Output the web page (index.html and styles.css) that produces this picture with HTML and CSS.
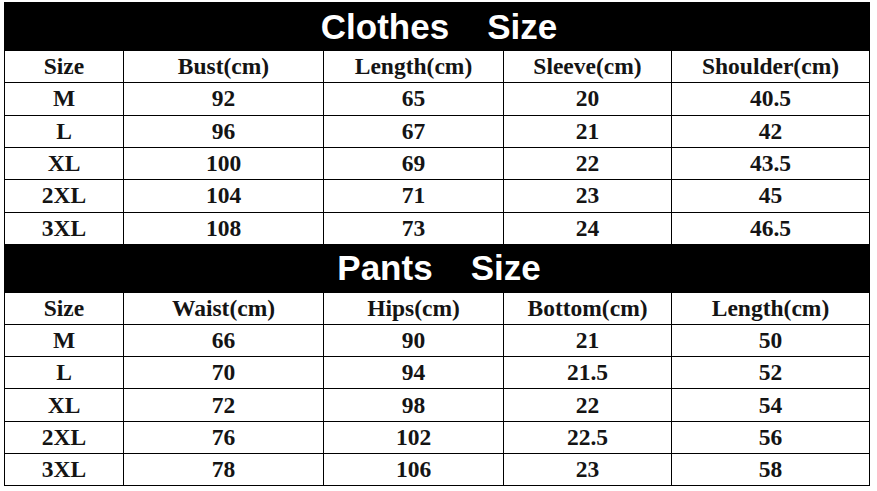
FILE: index.html
```html
<!DOCTYPE html>
<html>
<head>
<meta charset="utf-8">
<link rel="stylesheet" href="styles.css">
</head>
<body>
<div class="chart">
  <div class="title"><span>Clothes</span><span>Size</span></div>
  <div class="cell">Size</div><div class="cell">Bust(cm)</div><div class="cell">Length(cm)</div><div class="cell">Sleeve(cm)</div><div class="cell">Shoulder(cm)</div>
  <div class="cell">M</div><div class="cell">92</div><div class="cell">65</div><div class="cell">20</div><div class="cell">40.5</div>
  <div class="cell">L</div><div class="cell">96</div><div class="cell">67</div><div class="cell">21</div><div class="cell">42</div>
  <div class="cell">XL</div><div class="cell">100</div><div class="cell">69</div><div class="cell">22</div><div class="cell">43.5</div>
  <div class="cell">2XL</div><div class="cell">104</div><div class="cell">71</div><div class="cell">23</div><div class="cell">45</div>
  <div class="cell">3XL</div><div class="cell">108</div><div class="cell">73</div><div class="cell">24</div><div class="cell">46.5</div>
  <div class="title"><span>Pants</span><span>Size</span></div>
  <div class="cell">Size</div><div class="cell">Waist(cm)</div><div class="cell">Hips(cm)</div><div class="cell">Bottom(cm)</div><div class="cell">Length(cm)</div>
  <div class="cell">M</div><div class="cell">66</div><div class="cell">90</div><div class="cell">21</div><div class="cell">50</div>
  <div class="cell">L</div><div class="cell">70</div><div class="cell">94</div><div class="cell">21.5</div><div class="cell">52</div>
  <div class="cell">XL</div><div class="cell">72</div><div class="cell">98</div><div class="cell">22</div><div class="cell">54</div>
  <div class="cell">2XL</div><div class="cell">76</div><div class="cell">102</div><div class="cell">22.5</div><div class="cell">56</div>
  <div class="cell">3XL</div><div class="cell">78</div><div class="cell">106</div><div class="cell">23</div><div class="cell">58</div>
</div>
</body>
</html>
```
FILE: styles.css
```css
html, body {
  margin: 0;
  background: #fff;
}
body {
  padding: 2px 0 0 4px;
}
.chart {
  width: 866px;
  box-sizing: border-box;
  display: grid;
  grid-template-columns: 118px 199px 179px 167px 197px;
  grid-template-rows: 47px repeat(6, 31.33px) 47px repeat(6, 31.17px);
  gap: 1px;
  padding: 1px;
  background: #000;
}
.title {
  grid-column: 1 / -1;
  display: flex;
  justify-content: center;
  align-items: center;
  gap: 38px;
  color: #fff;
  font-family: "Liberation Sans", Arial, sans-serif;
  font-weight: bold;
  font-size: 35px;
  padding-left: 4px;
}
.cell {
  background: #fff;
  display: flex;
  align-items: center;
  justify-content: center;
  font-family: "Liberation Serif", "Times New Roman", serif;
  font-weight: bold;
  font-size: 23.5px;
  color: #141414;
}
```
